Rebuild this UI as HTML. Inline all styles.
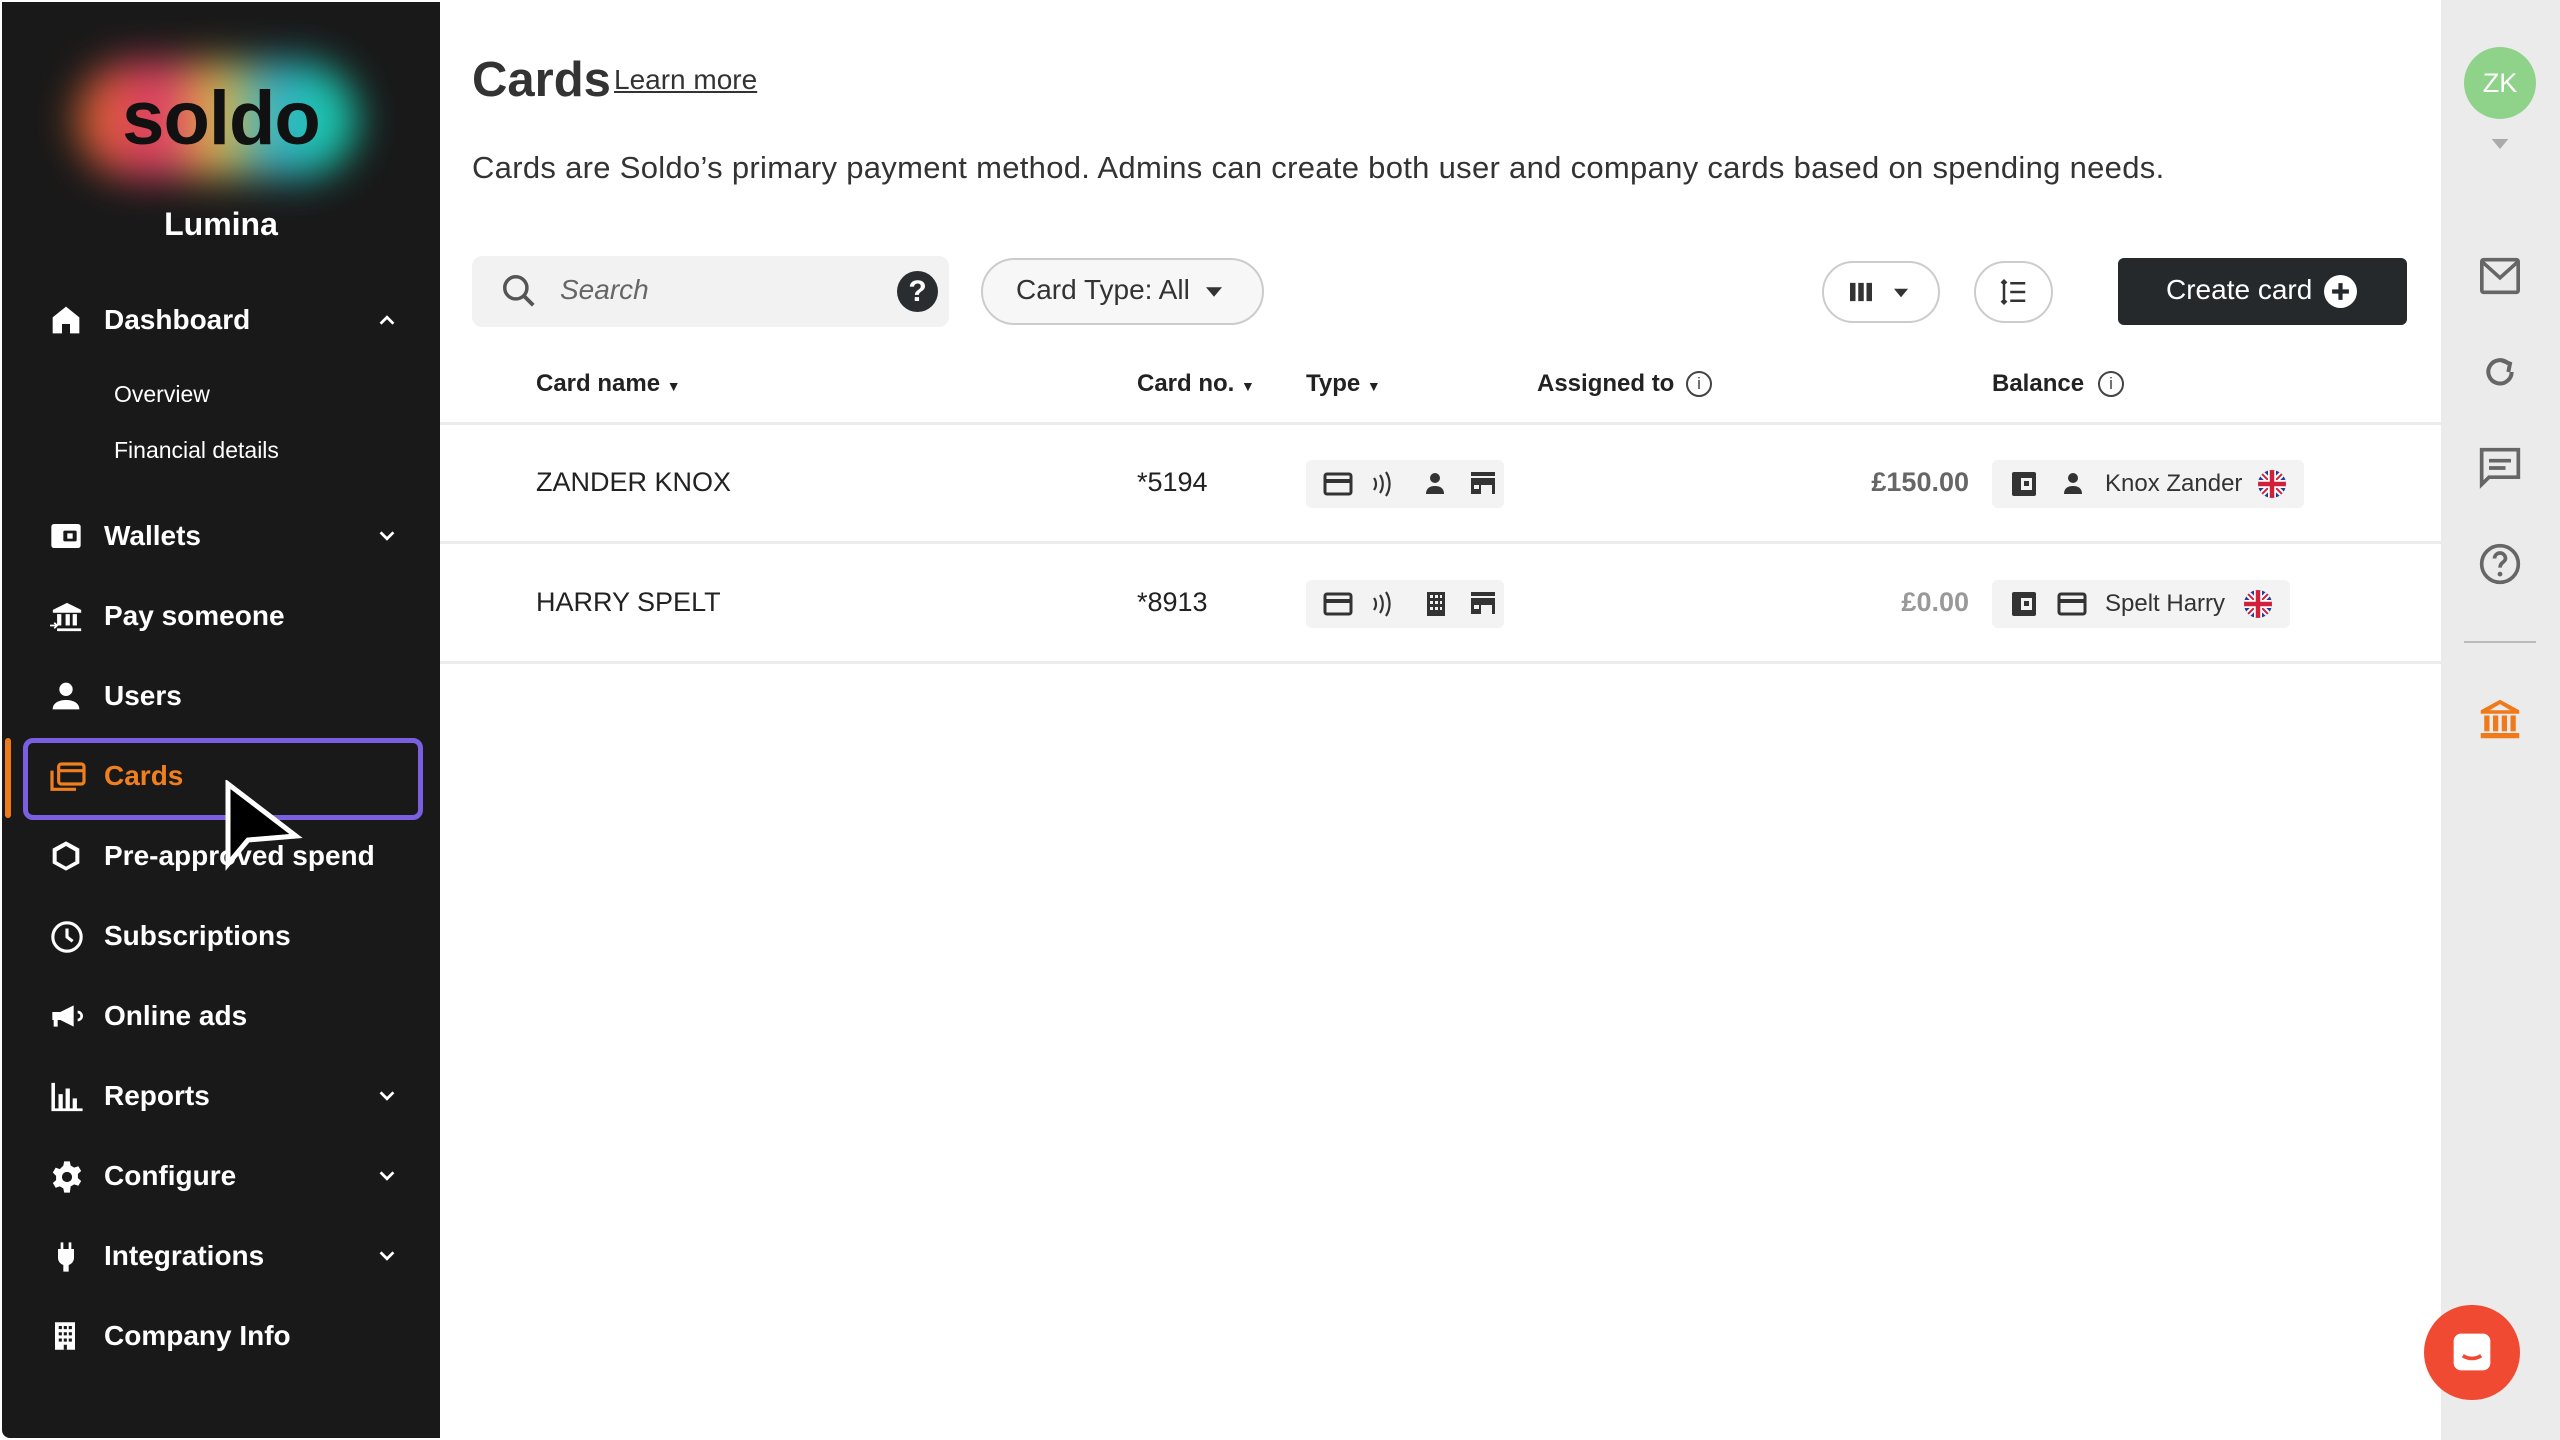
<!DOCTYPE html>
<html><head><meta charset="utf-8"><style>
*{margin:0;padding:0;box-sizing:border-box}
body{width:2560px;height:1440px;overflow:hidden;background:#fff;font-family:"Liberation Sans",sans-serif;position:relative}
.abs{position:absolute}
#side{left:2px;top:2px;width:438px;height:1436px;background:#191919;border-radius:0 0 0 8px}
.nav{position:absolute;left:0;color:#fff;font-weight:bold;font-size:28px;line-height:40px;height:40px;width:438px}
.nav .t{position:absolute;left:102px;white-space:nowrap}
.nav svg{position:absolute;left:48px;top:4px}
.nav svg.chev{left:374px;top:9px}
.sub{position:absolute;left:112px;color:#fff;font-size:23px;white-space:nowrap}
#rail{left:2441px;top:0;width:119px;height:1440px;background:#ebebeb}
.hdr{position:absolute;top:370px;font-weight:bold;font-size:24px;color:#222;white-space:nowrap}
.cell{position:absolute;font-size:27px;color:#222;white-space:nowrap}
.chip{position:absolute;background:#f3f3f3;border-radius:6px;height:48px}
.line{position:absolute;left:440px;width:2001px;height:3px;background:#ececec}
</style></head><body>
<div id="side" class="abs">
  <div class="abs" style="left:75px;top:60px;width:280px;height:115px;border-radius:60px;background:linear-gradient(90deg,#ff7a2a 0%,#ff3d7a 30%,#ffd24a 50%,#3ec8e8 70%,#18e8c8 90%);filter:blur(20px);opacity:.85"></div>
  <div class="abs" style="left:0;top:72px;width:438px;text-align:center;font-size:76px;font-weight:bold;color:#111;letter-spacing:-1px;line-height:90px">soldo</div>
  <div class="abs" style="left:0;top:204px;width:438px;text-align:center;font-size:32px;font-weight:bold;color:#fff">Lumina</div>

  <div class="nav" style="top:298px"><svg width="32" height="32" viewBox="0 0 24 24"><path d="M12 2L2 10v12h7v-7h6v7h7V10z" fill="#fff"/></svg><span class="t">Dashboard</span><svg class="chev" width="22" height="22" viewBox="0 0 24 24"><path d="M5 16l7-7 7 7" stroke="#fff" stroke-width="3" fill="none"/></svg></div>
  <div class="sub" style="top:379px">Overview</div>
  <div class="sub" style="top:435px">Financial details</div>
  <div class="nav" style="top:514px"><svg width="32" height="32" viewBox="0 0 24 24"><rect x="1" y="3" width="22" height="18" rx="2" fill="#fff"/><rect x="10" y="8" width="10" height="8" rx="1" fill="#191919"/><rect x="13" y="10" width="4" height="4" fill="#fff"/></svg><span class="t">Wallets</span><svg class="chev" width="22" height="22" viewBox="0 0 24 24"><path d="M5 8l7 7 7-7" stroke="#fff" stroke-width="3" fill="none"/></svg></div>
  <div class="nav" style="top:594px"><svg width="34" height="34" viewBox="0 0 24 24"><path d="M2 7L12 2l10 5v2H2z M5 10h3v8H5z M11 10h3v8h-3z M16 10h3v8h-3z M5 20h17v2H5z" fill="#fff"/><path d="M0 18h5M3 16l2 2-2 2" stroke="#fff" stroke-width="1.2" fill="none"/></svg><span class="t">Pay someone</span></div>
  <div class="nav" style="top:674px"><svg width="32" height="32" viewBox="0 0 24 24"><circle cx="12" cy="7" r="5" fill="#fff"/><path d="M2 22c0-5 5-7 10-7s10 2 10 7z" fill="#fff"/></svg><span class="t">Users</span></div>
  <div class="abs" style="left:3px;top:736px;width:6px;height:80px;background:#f07a1a;border-radius:3px"></div>
  <div class="abs" style="left:21px;top:736px;width:400px;height:82px;border:5px solid #7a5fe0;border-radius:10px"></div>
  <div class="nav" style="top:754px;color:#f07f1f"><svg width="36" height="32" viewBox="0 0 26 24"><path d="M1 8v14h18" stroke="#f07f1f" stroke-width="2.4" fill="none"/><rect x="6" y="3" width="19" height="15" rx="2" stroke="#f07f1f" stroke-width="2.4" fill="none"/><path d="M6 8h19" stroke="#f07f1f" stroke-width="2.4"/></svg><span class="t">Cards</span></div>
  <div class="nav" style="top:834px"><svg width="32" height="32" viewBox="0 0 24 24"><path d="M12 1l10 5.5v11L12 23 2 17.5v-11z" fill="#fff"/><path d="M12 4.5l7 4v7.5l-7 4-7-4V8.5z" fill="#191919"/></svg><span class="t">Pre-approved spend</span></div>
  <div class="nav" style="top:914px"><svg width="34" height="34" viewBox="0 0 24 24"><circle cx="12" cy="12" r="10" stroke="#fff" stroke-width="2.2" fill="none"/><path d="M12 6v6l4 3" stroke="#fff" stroke-width="2.2" fill="none"/></svg><span class="t">Subscriptions</span></div>
  <div class="nav" style="top:994px"><svg width="34" height="32" viewBox="0 0 24 24"><path d="M1 9h6l10-5v16L7 15H5v5H2v-5H1z" fill="#fff"/><path d="M20 9a3 3 0 010 6" stroke="#fff" stroke-width="2" fill="none"/></svg><span class="t">Online ads</span></div>
  <div class="nav" style="top:1074px"><svg width="34" height="34" viewBox="0 0 24 24"><path d="M1 2h2.5v20H1z M6 10h3v10H6z M11 6h3v14h-3z M16 13h3v7h-3z M1 20h22v2H1z" fill="#fff"/></svg><span class="t">Reports</span><svg class="chev" width="22" height="22" viewBox="0 0 24 24"><path d="M5 8l7 7 7-7" stroke="#fff" stroke-width="3" fill="none"/></svg></div>
  <div class="nav" style="top:1154px"><svg width="34" height="34" viewBox="0 0 24 24"><path d="M10 1h4l.6 3 2.5 1.4 2.9-1 2 3.4-2.3 2v3l2.3 2-2 3.4-2.9-1-2.5 1.4L14 23h-4l-.6-3-2.5-1.4-2.9 1-2-3.4 2.3-2v-3L2 8.8l2-3.4 2.9 1L9.4 4z" fill="#fff"/><circle cx="12" cy="12" r="3.6" fill="#191919"/></svg><span class="t">Configure</span><svg class="chev" width="22" height="22" viewBox="0 0 24 24"><path d="M5 8l7 7 7-7" stroke="#fff" stroke-width="3" fill="none"/></svg></div>
  <div class="nav" style="top:1234px"><svg width="32" height="34" viewBox="0 0 24 24"><path d="M8 1h2v5h4V1h2v5h2v7a6 6 0 01-4 5v5h-4v-5a6 6 0 01-4-5V6h2z" fill="#fff"/></svg><span class="t">Integrations</span><svg class="chev" width="22" height="22" viewBox="0 0 24 24"><path d="M5 8l7 7 7-7" stroke="#fff" stroke-width="3" fill="none"/></svg></div>
  <div class="nav" style="top:1314px"><svg width="30" height="32" viewBox="0 0 24 24"><rect x="4" y="1" width="16" height="22" fill="#fff"/><g fill="#191919"><rect x="7" y="4" width="2.5" height="2.5"/><rect x="11" y="4" width="2.5" height="2.5"/><rect x="15" y="4" width="2.5" height="2.5"/><rect x="7" y="9" width="2.5" height="2.5"/><rect x="11" y="9" width="2.5" height="2.5"/><rect x="15" y="9" width="2.5" height="2.5"/><rect x="7" y="14" width="2.5" height="2.5"/><rect x="11" y="14" width="2.5" height="2.5"/><rect x="15" y="14" width="2.5" height="2.5"/><rect x="11" y="19" width="2.5" height="4"/></g></svg><span class="t">Company Info</span></div>
  <svg class="abs" style="left:222px;top:778px" width="80" height="100" viewBox="0 0 40 50"><path d="M2 2L2 42L12 30L36 28Z" fill="#000" stroke="#fff" stroke-width="2.5"/></svg>
</div>

<div class="abs" style="left:472px;top:52px;font-size:49px;font-weight:bold;color:#333">Cards</div>
<div class="abs" style="left:614px;top:64px;font-size:28px;color:#333;text-decoration:underline">Learn more</div>
<div class="abs" style="left:472px;top:150px;font-size:31px;color:#333;white-space:nowrap;letter-spacing:0.3px">Cards are Soldo’s primary payment method. Admins can create both user and company cards based on spending needs.</div>

<div class="abs" style="left:472px;top:256px;width:477px;height:71px;background:#f2f2f2;border-radius:10px"></div>
<svg class="abs" style="left:500px;top:272px" width="38" height="38" viewBox="0 0 24 24"><circle cx="10" cy="10" r="7" stroke="#555" stroke-width="2.2" fill="none"/><path d="M15 15l6 6" stroke="#555" stroke-width="2.4"/></svg>
<div class="abs" style="left:560px;top:274px;font-size:28px;font-style:italic;color:#666">Search</div>
<div class="abs" style="left:897px;top:271px;width:41px;height:41px;border-radius:50%;background:#2a2d2f;color:#fff;font-weight:bold;font-size:30px;text-align:center;line-height:41px">?</div>

<div class="abs" style="left:981px;top:258px;width:283px;height:67px;border:2px solid #ccc;border-radius:34px;background:#f7f7f7"></div>
<div class="abs" style="left:1016px;top:274px;font-size:28px;color:#333">Card Type: All</div>
<svg class="abs" style="left:1206px;top:286px" width="16" height="12" viewBox="0 0 10 6"><path d="M0 0h10L5 6z" fill="#333"/></svg>

<div class="abs" style="left:1822px;top:261px;width:118px;height:62px;border:2px solid #ccc;border-radius:31px"></div>
<svg class="abs" style="left:1850px;top:281px" width="22" height="22" viewBox="0 0 12 12"><path d="M0 1h3v10H0zM4.5 1h3v10h-3zM9 1h3v10H9z" fill="#333"/></svg>
<svg class="abs" style="left:1894px;top:288px" width="14" height="10" viewBox="0 0 10 6"><path d="M0 0h10L5 6z" fill="#333"/></svg>
<div class="abs" style="left:1974px;top:261px;width:79px;height:62px;border:2px solid #ccc;border-radius:31px"></div>
<svg class="abs" style="left:1999px;top:277px" width="30" height="30" viewBox="0 0 24 24"><path d="M4 3v18M2 5l2-2 2 2M2 19l2 2 2-2M9 5h12M9 12h12M9 19h12" stroke="#333" stroke-width="2" fill="none"/></svg>

<div class="abs" style="left:2118px;top:258px;width:289px;height:67px;background:#25292b;border-radius:6px"></div>
<div class="abs" style="left:2166px;top:274px;font-size:28px;color:#fff">Create card</div>
<div class="abs" style="left:2324px;top:275px;width:33px;height:33px;border-radius:50%;background:#fff"></div>
<svg class="abs" style="left:2330px;top:281px" width="21" height="21" viewBox="0 0 10 10"><path d="M5 1v8M1 5h8" stroke="#25292b" stroke-width="2"/></svg>

<div class="hdr" style="left:536px">Card name <span style="font-size:14px">▼</span></div>
<div class="hdr" style="left:1137px">Card no. <span style="font-size:14px">▼</span></div>
<div class="hdr" style="left:1306px">Type <span style="font-size:14px">▼</span></div>
<div class="hdr" style="left:1537px">Assigned to</div>
<div class="abs" style="left:1686px;top:371px;width:26px;height:26px;border:2px solid #444;border-radius:50%;font-size:17px;text-align:center;line-height:22px;color:#444">i</div>
<div class="hdr" style="left:1992px">Balance</div>
<div class="abs" style="left:2098px;top:371px;width:26px;height:26px;border:2px solid #444;border-radius:50%;font-size:17px;text-align:center;line-height:22px;color:#444">i</div>

<div class="line" style="top:422px"></div>
<div class="line" style="top:541px"></div>
<div class="line" style="top:661px"></div>

<div class="cell" style="left:536px;top:467px">ZANDER KNOX</div>
<div class="cell" style="left:1137px;top:467px">*5194</div>
<div class="chip" style="left:1306px;top:460px;width:198px"></div>
<div class="chip" style="left:1992px;top:460px;width:312px"></div>
<div class="cell" style="left:1860px;top:467px;width:109px;text-align:right;font-weight:bold;color:#666">£150.00</div>
<div class="cell" style="left:2105px;top:470px;font-size:24px;color:#333">Knox Zander</div>
<div class="cell" style="left:536px;top:587px">HARRY SPELT</div>
<div class="cell" style="left:1137px;top:587px">*8913</div>
<div class="chip" style="left:1306px;top:580px;width:198px"></div>
<div class="chip" style="left:1992px;top:580px;width:298px"></div>
<div class="cell" style="left:1860px;top:587px;width:109px;text-align:right;font-weight:bold;color:#999">£0.00</div>
<div class="cell" style="left:2105px;top:590px;font-size:24px;color:#333">Spelt Harry</div>

<svg class="abs" style="left:0;top:0" width="2560" height="1440">
<defs>
<g id="card"><rect x="0" y="2" width="26" height="20" rx="2" stroke="#333" stroke-width="3" fill="none"/><rect x="0" y="7" width="26" height="4" fill="#333"/></g>
<g id="nfc" fill="none" stroke="#333" stroke-width="2.2"><path d="M2 6a10 10 0 010 12"/><path d="M8 3a16 16 0 010 18"/><path d="M14 0a22 22 0 010 24"/></g>
<g id="person" fill="#333"><circle cx="9" cy="6" r="5"/><path d="M0 22c0-6 4-8 9-8s9 2 9 8z"/></g>
<g id="shop" fill="#333"><rect x="0" y="0" width="24" height="4"/><path d="M0 6h24v16h-3v-9H10v9H0z"/><rect x="3" y="13" width="5" height="4" fill="#f3f3f3"/></g>
<g id="bld" fill="#333"><rect x="0" y="0" width="18" height="24"/><g fill="#f3f3f3"><rect x="3" y="3" width="3" height="3"/><rect x="8" y="3" width="3" height="3"/><rect x="13" y="3" width="2" height="3"/><rect x="3" y="9" width="3" height="3"/><rect x="8" y="9" width="3" height="3"/><rect x="13" y="9" width="2" height="3"/><rect x="3" y="15" width="3" height="3"/><rect x="8" y="15" width="3" height="3"/><rect x="13" y="15" width="2" height="3"/></g></g>
<g id="wal"><rect x="0" y="0" width="24" height="24" rx="2" fill="#333"/><rect x="9" y="6" width="11" height="12" fill="#f3f3f3"/><rect x="12" y="9" width="5" height="5" fill="#333"/></g>
<g id="uk"><clipPath id="cc"><circle cx="14" cy="14" r="14"/></clipPath><g clip-path="url(#cc)"><rect width="28" height="28" fill="#1f3f94"/><path d="M0 0L28 28M28 0L0 28" stroke="#fff" stroke-width="6"/><path d="M0 0L28 28M28 0L0 28" stroke="#d2203a" stroke-width="2"/><path d="M14 0v28M0 14h28" stroke="#fff" stroke-width="8"/><path d="M14 0v28M0 14h28" stroke="#d2203a" stroke-width="4.5"/></g></g>
</defs>
<use href="#card" x="1325" y="472"/><use href="#nfc" x="1372" y="472"/><use href="#person" x="1426" y="472"/><use href="#shop" x="1471" y="472"/>
<use href="#card" x="1325" y="592"/><use href="#nfc" x="1372" y="592"/><use href="#bld" x="1427" y="592"/><use href="#shop" x="1471" y="592"/>
<use href="#wal" x="2012" y="472"/><use href="#person" x="2064" y="472"/><use href="#uk" x="2258" y="470"/>
<use href="#wal" x="2012" y="592"/><use href="#card" x="2059" y="592"/><use href="#uk" x="2244" y="590"/>
</svg>

<div id="rail" class="abs"></div>
<div class="abs" style="left:2464px;top:47px;width:72px;height:72px;border-radius:50%;background:#8fd38a;color:#fff;font-size:27px;text-align:center;line-height:72px">ZK</div>
<svg class="abs" style="left:2491px;top:139px" width="18" height="10" viewBox="0 0 10 6"><path d="M0 0h10L5 6z" fill="#aaa"/></svg>
<svg class="abs" style="left:2478px;top:256px" width="44" height="40" viewBox="0 0 24 22"><rect x="2" y="2" width="20" height="18" rx="1" stroke="#666" stroke-width="2" fill="none"/><path d="M2 3l10 9 10-9" stroke="#666" stroke-width="2" fill="none"/></svg>
<svg class="abs" style="left:2480px;top:350px" width="40" height="44" viewBox="0 0 24 24"><path d="M19 12a7 7 0 11-2-5" stroke="#666" stroke-width="2.4" fill="none"/><path d="M13 5l5 2-1 5" stroke="#666" stroke-width="2.4" fill="none"/></svg>
<svg class="abs" style="left:2478px;top:446px" width="44" height="44" viewBox="0 0 24 24"><path d="M2 2h20v15H6l-4 4z" stroke="#666" stroke-width="2" fill="none"/><path d="M6 8h12M6 12h9" stroke="#666" stroke-width="2"/></svg>
<svg class="abs" style="left:2478px;top:542px" width="44" height="44" viewBox="0 0 24 24"><circle cx="12" cy="12" r="10" stroke="#666" stroke-width="2" fill="none"/><path d="M9 9a3 3 0 116 0c0 2-3 2-3 5" stroke="#666" stroke-width="2" fill="none"/><circle cx="12" cy="17.5" r="1.3" fill="#666"/></svg>
<div class="abs" style="left:2464px;top:641px;width:72px;height:2px;background:#bbb"></div>
<svg class="abs" style="left:2479px;top:698px" width="42" height="42" viewBox="0 0 24 24"><path d="M12 1l11 6v2H1V7z M3 10h3v9H3z M8 10h3v9H8z M13 10h3v9h-3z M18 10h3v9h-3z M1 20h22v3H1z" fill="#f07a1a"/><path d="M12 3.5l6 3.5H6z" fill="#ebebeb"/></svg>
<div class="abs" style="left:2424px;top:1305px;width:96px;height:95px;border-radius:48px;background:#f04b32"></div>
<svg class="abs" style="left:2450px;top:1330px" width="44" height="44" viewBox="0 0 24 24"><rect x="2" y="2" width="20" height="20" rx="4" fill="#fff"/><path d="M7 14c3 2 7 2 10 0" stroke="#f04b32" stroke-width="2" fill="none"/></svg>
</body></html>
